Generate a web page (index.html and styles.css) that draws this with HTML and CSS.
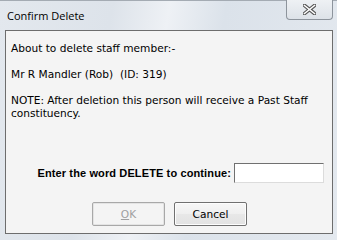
FILE: index.html
```html
<!DOCTYPE html>
<html lang="en">
<head>
    <meta charset="UTF-8">
    <title>Confirm Delete</title>
    <link rel="stylesheet" href="styles.css">
</head>
<body>
    <div class="window">
        <div class="titlebar">
            <span class="title">Confirm Delete</span>
            <button class="close-btn" type="button" aria-label="Close">
                <svg width="13" height="11" viewBox="0 0 13 11">
                    <path d="M1.5 1.5 L11.5 9.5 M11.5 1.5 L1.5 9.5" stroke="#555" stroke-width="3.6" stroke-linecap="square"/>
                    <path d="M1.5 1.5 L11.5 9.5 M11.5 1.5 L1.5 9.5" stroke="#ffffff" stroke-width="1.6" stroke-linecap="square"/>
                </svg>
            </button>
        </div>
        <div class="client">
            <p>About to delete staff member:-</p>
            <p>Mr R Mandler (Rob)&nbsp; (ID: 319)</p>
            <p>NOTE: After deletion this person will receive a Past Staff<br>constituency.</p>
            <div class="confirm-row">
                <label for="confirmWord">Enter the word DELETE to continue:</label>
                <input type="text" id="confirmWord">
            </div>
            <div class="buttons">
                <button type="button" class="btn" disabled><u>O</u>K</button>
                <button type="button" class="btn">Cancel</button>
            </div>
        </div>
    </div>
</body>
</html>
```
FILE: styles.css
```css
body {
    margin: 0;
    font-family: 'DejaVu Sans', Verdana, sans-serif;
    font-size: 10.6px;
    background: #ffffff;
}

.window {
    width: 337px;
    height: 240px;
    box-sizing: border-box;
    display: flex;
    flex-direction: column;
    background: linear-gradient(100deg, #e3e8ee 0%, #dde3ea 30%, #eef1f5 45%, #dbe2ea 60%, #e4e9ef 100%);
    border-top: 1px solid #a4abb3;
}

.titlebar {
    height: 29px;
    display: flex;
    align-items: flex-start;
    justify-content: space-between;
}

.title {
    font-family: 'Open Sans', 'Liberation Sans', sans-serif;
    font-size: 11px;
    color: #000;
    margin: 7px 0 0 7px;
}

.close-btn {
    width: 47px;
    height: 20px;
    margin: -1px 4px 0 0;
    padding: 0;
    border: 1px solid #8d949c;
    border-top: none;
    border-radius: 0 0 4px 4px;
    background: linear-gradient(#eef1f4, #dde2e8);
    display: flex;
    align-items: center;
    justify-content: center;
}

.client {
    flex: 1;
    margin: 0 4px 6px 5px;
    border: 1px solid #6d6d6d;
    background: #f4f4f4;
    padding: 11px 6px 0 5px;
    display: flex;
    flex-direction: column;
}

.client p {
    margin: 0 0 13px;
    line-height: 13px;
}

.confirm-row {
    margin-top: 30px;
    display: flex;
    align-items: center;
    justify-content: flex-end;
    gap: 3px;
    padding-right: 2px;
}

.confirm-row label {
    font-family: 'Liberation Sans', Arial, sans-serif;
    font-size: 11px;
    font-weight: bold;
    letter-spacing: 0.12px;
}

.confirm-row input {
    width: 84px;
    height: 16px;
    padding: 1px 2px;
    border: 1px solid #dcdcdc;
    border-top-color: #707070;
    border-left-color: #707070;
    background: #fff;
    font: inherit;
}

.buttons {
    margin-top: 19px;
    display: flex;
    gap: 9px;
    padding-left: 81px;
}

.btn {
    width: 73px;
    height: 24px;
    font-family: inherit;
    font-size: 10.6px;
    color: #000;
    border: 1px solid #707070;
    border-radius: 2px;
    background: linear-gradient(#f7f7f7 0%, #efefef 50%, #e8e8e8 51%, #e2e2e2 100%);
    box-shadow: inset 0 0 0 1px #fdfdfd;
}

.btn:disabled {
    color: #a0a0a0;
    border-color: #a8a8a8;
    background: #f4f4f4;
    box-shadow: inset 0 0 0 1px #e4e4e4;
}
```
